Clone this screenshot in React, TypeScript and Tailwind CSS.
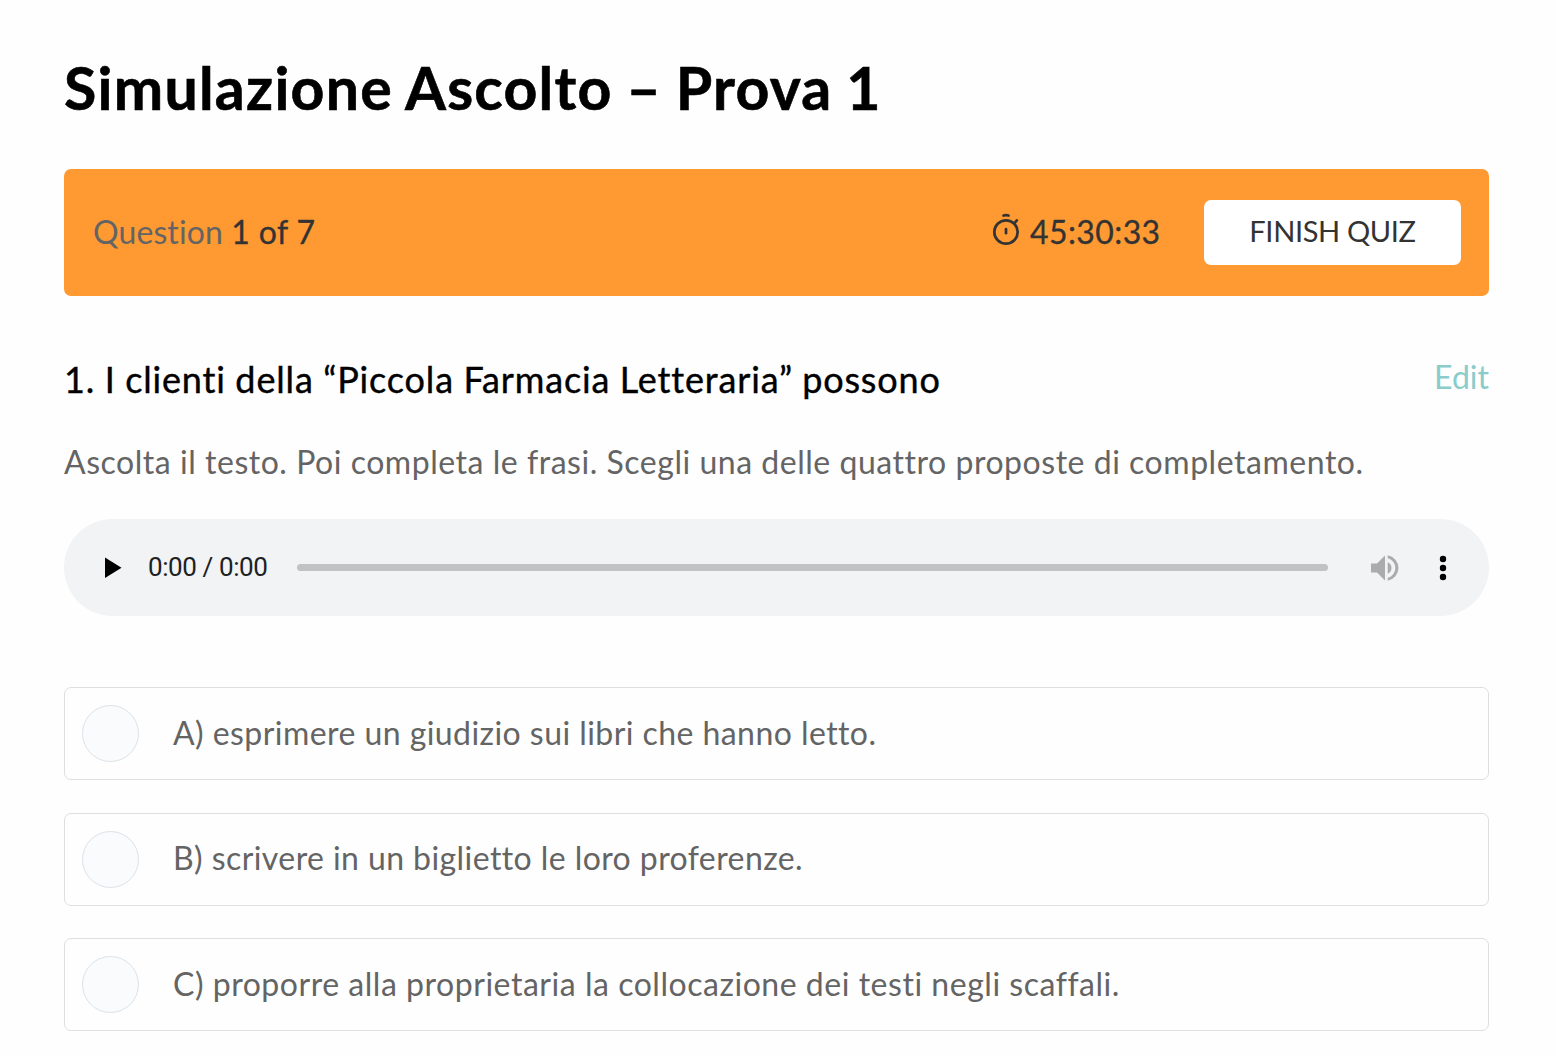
import React, { useState } from 'react';

const answers = [
    { text: 'A) esprimere un giudizio sui libri che hanno letto.', tracking: 'tracking-[0.44px]' },
    { text: 'B) scrivere in un biglietto le loro proferenze.', tracking: 'tracking-[0.42px]' },
    { text: 'C) proporre alla proprietaria la collocazione dei testi negli scaffali.', tracking: 'tracking-[0.53px]' },
];

const StopwatchIcon = () => (
    <svg width="28" height="34" viewBox="0 0 28 34" fill="none" stroke="currentColor" strokeWidth="2.7" strokeLinecap="round">
        <circle cx="14" cy="20" r="11.7" />
        <path d="M14 17.2v4" />
        <path d="M22.6 11l2.2-2.6" />
        <path d="M11.5 3.6c1.4-.5 3.6-.5 5 0" />
    </svg>
);

const AudioPlayer = () => (
    <div className="mt-[34px] flex h-[97px] items-center rounded-full bg-[#f1f3f4] pr-[42px] pl-[41px]">
        <button aria-label="play">
            <svg className="block" width="17" height="22" viewBox="0 0 17 22"><path d="M0 .5l16.5 10.2L0 21z" /></svg>
        </button>
        <span className="mt-[-2px] ml-[26px] w-[120px] font-['Roboto',sans-serif] text-[26px] leading-8 tracking-[-0.4px] whitespace-nowrap text-[#202124]">0:00 / 0:00</span>
        <div className="ml-[29px] h-[7px] flex-1 rounded-full bg-[#c1c2c3]" />
        <button className="ml-[43px]" aria-label="mute">
            <svg className="block" width="28" height="28" viewBox="0 0 28 28" fill="#aaabac">
                <path d="M0 9.5h6l8-8v25l-8-8H0z" />
                <path d="M16.7 8.3a6.2 6.2 0 0 1 0 11.4z" />
                <path d="M16.7 1.2a13 13 0 0 1 0 25.6v-3a10.1 10.1 0 0 0 0-19.6z" />
            </svg>
        </button>
        <button className="ml-[40px]" aria-label="more">
            <svg className="block" width="8" height="26" viewBox="0 0 8 26">
                <circle cx="4" cy="4" r="3.2" />
                <circle cx="4" cy="13" r="3.2" />
                <circle cx="4" cy="22" r="3.2" />
            </svg>
        </button>
    </div>
);

export default function App() {
    const [selected, setSelected] = useState<number | null>(null);

    return (
        <div className="h-[1056px] overflow-hidden bg-[#fefefe] pr-[67px] pl-16 font-['Lato',sans-serif] text-[#646464]">
            <h1 className="pt-12 text-[59px] leading-20 font-bold tracking-[1.25px] [word-spacing:-1.75px] whitespace-nowrap text-black [-webkit-text-stroke:0.6px]">Simulazione Ascolto – Prova 1</h1>

            <div className="mt-[41px] flex h-[127px] items-center justify-between rounded-[7px] bg-[#ff9a33] pr-7 pl-[29px]">
                <div className="pb-0.5 text-[32px] leading-10 tracking-[0.1px] whitespace-nowrap">
                    <span>Question</span> <span className="tracking-[0.4px] text-[#333] [-webkit-text-stroke:0.3px]">1 of 7</span>
                </div>
                <div className="flex items-center text-[#333]">
                    <div className="pb-2">
                        <StopwatchIcon />
                    </div>
                    <span className="ml-[10px] w-[131px] pb-0.5 text-[32px] leading-10 tracking-[0.4px] whitespace-nowrap [-webkit-text-stroke:0.3px]">45:30:33</span>
                    <button className="ml-[43px] h-[65px] w-[257px] rounded-[7px] bg-white pb-[3px] text-[29px] leading-10 tracking-[-0.35px] whitespace-nowrap">FINISH QUIZ</button>
                </div>
            </div>

            <div className="mt-[58px] flex h-[50px] items-center justify-between">
                <h3 className="text-[36px] leading-[50px] tracking-[0.85px] [word-spacing:-0.5px] whitespace-nowrap text-black [-webkit-text-stroke:0.4px]">1. I clienti della “Piccola Farmacia Letteraria” possono</h3>
                <a className="pb-1 text-[32px] leading-10 text-[#8acbcb]">Edit</a>
            </div>

            <p className="mt-[34px] text-[32px] leading-[47px] tracking-[0.53px] whitespace-nowrap">Ascolta il testo. Poi completa le frasi. Scegli una delle quattro proposte di completamento.</p>

            <AudioPlayer />

            <ul className="mt-[71px] flex flex-col gap-[32.5px]">
                {answers.map((answer, i) => (
                    <li
                        key={answer.text}
                        onClick={() => setSelected(i)}
                        className="flex h-[93px] items-center rounded-[7px] border border-[#dcdfe1] pl-[17px]"
                    >
                        <span className={`size-[57px] rounded-full border border-[#dbe3e8] ${selected === i ? 'bg-[#8acbcb]' : 'bg-[#f9fbfd]'}`} />
                        <span className={`ml-[34px] pb-[1.2px] text-[32px] leading-10 whitespace-nowrap ${answer.tracking}`}>{answer.text}</span>
                    </li>
                ))}
            </ul>
        </div>
    );
}
